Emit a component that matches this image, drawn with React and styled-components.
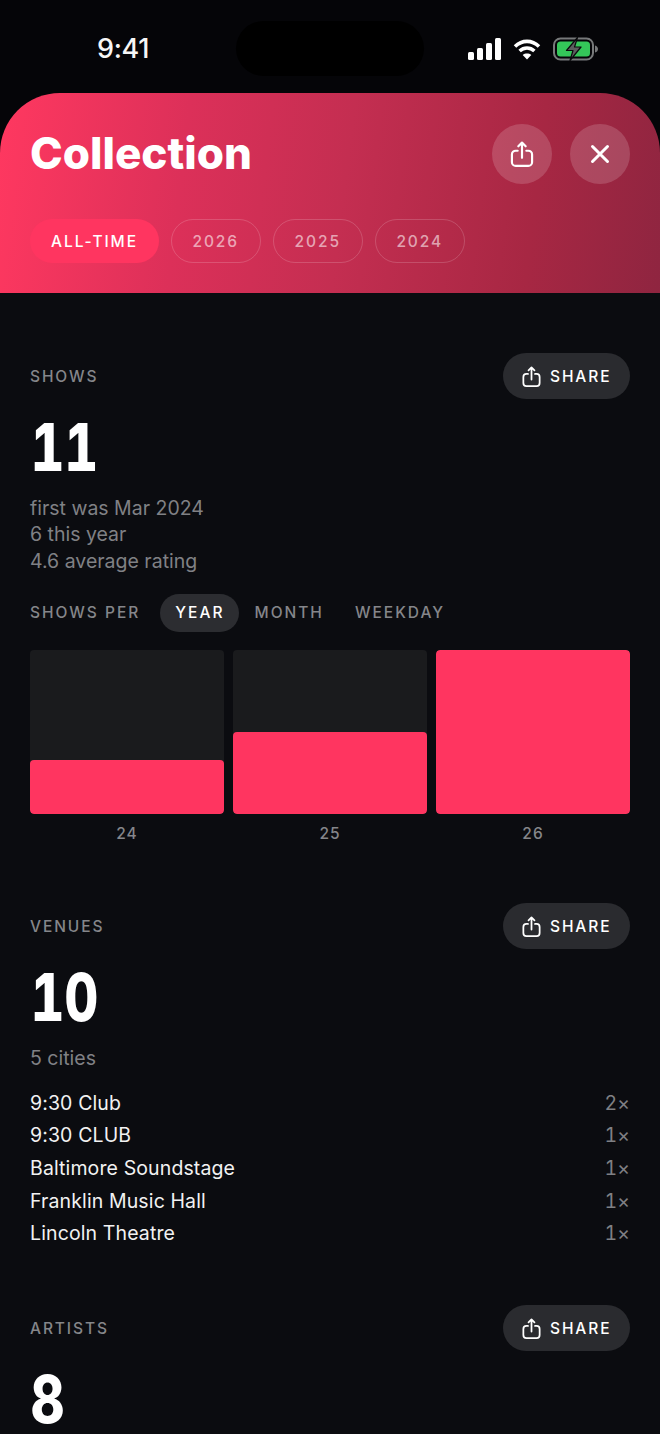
import React from "react";
import styled, { createGlobalStyle } from "styled-components";

const Global = createGlobalStyle`
  html, body { margin: 0; padding: 0; background: #0b0c10; }
  body { font-family: Inter, "Noto Sans", sans-serif; -webkit-font-smoothing: antialiased; }
  * { box-sizing: border-box; }
`;

const Page = styled.div`
  width: 660px; height: 1434px; overflow: hidden; background: #0b0c10; color: #fff;
`;
const StatusBar = styled.div`
  height: 93px; background: #050508; display: flex; align-items: flex-start; padding: 21px 61px 0 97px;
`;
const Time = styled.div`
  font-size: 27px; font-weight: 500; line-height: 55px; width: 139px; letter-spacing: -0.3px; color: #f6f6f6;
`;
const Island = styled.div`
  width: 188px; height: 55px; border-radius: 28px; background: #000;
`;
const StatusIcons = styled.div`
  margin-left: 44px; height: 55px; display: flex; align-items: center; gap: 12px;
`;
const SheetBack = styled.div`background: #050508;`;
const Header = styled.header`
  height: 200px; border-radius: 60px 60px 0 0; padding: 30px 30px 0;
  background: linear-gradient(97deg, #ff3860 0%, #dc3059 28%, #c42e51 52%, #a72743 80%, #8f2540 100%);
`;
const TitleRow = styled.div`
  display: flex; align-items: center; justify-content: space-between; height: 60px;
`;
const Title = styled.h1`
  margin: 0; font-size: 44px; font-weight: 800; letter-spacing: 0; line-height: 60px;
`;
const HeaderButtons = styled.div`display: flex; gap: 18px; margin-top: 2px;`;
const RoundButton = styled.button`
  width: 60px; height: 60px; border-radius: 50%; border: 0; padding: 0; color: #fff;
  background: rgba(255,255,255,.16); display: flex; align-items: center; justify-content: center;
`;
const Pills = styled.div`display: flex; gap: 11.5px; margin-top: 36px;`;
const Pill = styled.div`
  height: 44px; width: ${p => p.$w}px; border-radius: 22px; display: flex; align-items: center; justify-content: center;
  font-size: 15.5px; font-weight: 500; letter-spacing: 1.9px;
  ${p => p.$active
    ? `background: #ff3560; color: #fff;`
    : `border: 1.5px solid rgba(255,255,255,.17); color: rgba(255,255,255,.58);`}
`;
const Main = styled.main`padding: 60px 30px 0; display: flex; flex-direction: column;`;
const Section = styled.section`margin-bottom: ${p => p.$mb}px;`;
const SectionHead = styled.div`display: flex; align-items: center; justify-content: space-between; height: 46px;`;
const Label = styled.div`
  font-size: 15.5px; font-weight: 500; letter-spacing: 1.9px; color: #85868a;
`;
const ShareBtn = styled.button`
  width: 127px; height: 46px; border-radius: 23px; border: 0; background: #2a2b2f; color: #fff;
  display: flex; align-items: center; justify-content: flex-start; gap: 8px; padding: 0 0 0 18px;
  font: 500 15.5px Inter, sans-serif; letter-spacing: 1.9px;
`;
const BigNumber = styled.div`
  font-family: Inter, sans-serif; font-weight: 800; font-variant-numeric: tabular-nums;
  font-size: 66px; line-height: 60px; height: 60px; margin-top: 18px; padding-left: 1px;
  transform: scaleX(.79); transform-origin: left center;
`;
const SubLines = styled.div`margin-top: ${p => p.$mt}px; font-size: 19.5px; line-height: 26.4px; color: #808185;`;
const TabRow = styled.div`display: flex; align-items: center; height: 38px; margin-top: 20px;`;
const TabLabel = styled.span`
  font-size: 15.5px; font-weight: 500; letter-spacing: 2px; color: #85868a; margin-right: 20px; padding-bottom: 1px;
`;
const Tab = styled.span`
  height: 38px; border-radius: 19px; display: flex; align-items: center; padding-bottom: 1px;
  font-size: 15.5px; font-weight: 500; letter-spacing: 2px;
  ${p => p.$active
    ? `background: #2c2d31; color: #fff; padding-left: 15px; padding-right: 15px; margin-right: -1px;`
    : `color: #85868a; padding-left: 16px; padding-right: 15px;`}
`;
const Chart = styled.div`display: grid; grid-template-columns: repeat(3, 194px); gap: 9px; margin-top: 18px;`;
const Track = styled.div`
  height: 164px; background: #1a1b1d; border-radius: 4px; display: flex; align-items: flex-end; overflow: hidden;
`;
const Fill = styled.div`width: 100%; background: #ff3560; border-radius: 4px;`;
const BarLabel = styled.div`
  text-align: center; font-size: 15.5px; font-weight: 500; letter-spacing: 1px; color: #85868a; line-height: 40px; height: 38px;
`;
const Rows = styled.div`margin-top: 15px; display: flex; flex-direction: column;`;
const Row = styled.div`
  display: flex; justify-content: space-between; height: 32.7px; line-height: 32.7px; font-size: 19.5px; color: #f2f2f2;
  letter-spacing: 0.12px;
`;
const Count = styled.span`color: #7f8084; font-variant-numeric: tabular-nums;`;

const ShareIcon = ({ s = 24, w = 2 }) => (
  <svg width={s} height={s} viewBox="0 0 24 24" fill="none" stroke="currentColor" strokeWidth={w} strokeLinecap="round" strokeLinejoin="round">
    <path d="M12 15.5V1.5M8.6 4.9L12 1.5l3.4 3.4" />
    <path d="M8 9H6.200a3.500 3.500 0 0 0-3.500 3.500v7a3.500 3.500 0 0 0 3.500 3.500h11.600a3.500 3.500 0 0 0 3.500-3.500v-7A3.500 3.500 0 0 0 17.800 9H16" />
  </svg>
);
const CloseIcon = () => (
  <svg width="22" height="22" viewBox="0 0 22 22" fill="none" stroke="currentColor" strokeWidth="3" strokeLinecap="round">
    <path d="M3.500 3.500l15 15M18.500 3.500l-15 15" />
  </svg>
);
const Signal = () => (
  <svg width="33" height="22" viewBox="0 0 33 22" fill="#fff">
    <rect x="0" y="14" width="6" height="8" rx="1.5" /><rect x="9" y="10" width="6" height="12" rx="1.5" />
    <rect x="18" y="5" width="6" height="17" rx="1.5" /><rect x="27" y="0" width="6" height="22" rx="1.5" />
  </svg>
);
const Wifi = () => (
  <svg width="28" height="22" viewBox="0 0 28 22" fill="none" stroke="#fff" strokeWidth="3.6">
    <path d="M2 8.500C9 1.700 19 1.700 26 8.500" />
    <path d="M6.600 13C11 9 17 9 21.400 13" />
    <path d="M14 21.500l-4.300-4.600c2.500-1.900 6.100-1.900 8.600 0z" fill="#fff" stroke="none" />
  </svg>
);
const Battery = () => (
  <svg width="46" height="24" viewBox="0 0 46 24">
    <rect x="1" y="1.500" width="39" height="21" rx="6.500" fill="none" stroke="#77797a" strokeWidth="2" />
    <rect x="4" y="4.500" width="33" height="15" rx="3.500" fill="#34c759" />
    <path d="M42 8.500c2 .5 3 2 3 3.500s-1 3-3 3.500z" fill="#77797a" />
    <path d="M24.500 0.500L13.500 13.500h6.500L17 23.500l11-13.500h-6.500z" fill="#5c5e5f" stroke="#0a0b0d" strokeWidth="1.2" strokeLinejoin="round" />
  </svg>
);

const venues = [["9:30 Club","2×"],["9:30 CLUB","1×"],["Baltimore Soundstage","1×"],["Franklin Music Hall","1×"],["Lincoln Theatre","1×"]];
const bars = [["24",54],["25",82],["26",164]];

const Head = ({ children }) => (
  <SectionHead>
    <Label>{children}</Label>
    <ShareBtn><ShareIcon s={21} w={2} />SHARE</ShareBtn>
  </SectionHead>
);

export default function App() {
  return (
    <Page>
      <Global />
      <StatusBar>
        <Time>9:41</Time>
        <Island />
        <StatusIcons><Signal /><Wifi /><Battery /></StatusIcons>
      </StatusBar>
      <SheetBack>
        <Header>
          <TitleRow>
            <Title>Collection</Title>
            <HeaderButtons>
              <RoundButton><ShareIcon s={26} w={2} /></RoundButton>
              <RoundButton><CloseIcon /></RoundButton>
            </HeaderButtons>
          </TitleRow>
          <Pills>
            <Pill $active $w={129}>ALL-TIME</Pill>
            <Pill $w={90.5}>2026</Pill>
            <Pill $w={90.5}>2025</Pill>
            <Pill $w={90.5}>2024</Pill>
          </Pills>
        </Header>
      </SheetBack>
      <Main>
        <Section $mb={51}>
          <Head>SHOWS</Head>
          <BigNumber>11</BigNumber>
          <SubLines $mt={18}>
            <div>first was Mar 2024</div>
            <div>6 this year</div>
            <div>4.6 average rating</div>
          </SubLines>
          <TabRow>
            <TabLabel>SHOWS PER</TabLabel>
            <Tab $active>YEAR</Tab>
            <Tab>MONTH</Tab>
            <Tab>WEEKDAY</Tab>
          </TabRow>
          <Chart>
            {bars.map(([l, h]) => (
              <div key={l}>
                <Track><Fill style={{ height: h }} /></Track>
                <BarLabel>{l}</BarLabel>
              </div>
            ))}
          </Chart>
        </Section>
        <Section $mb={55}>
          <Head>VENUES</Head>
          <BigNumber>10</BigNumber>
          <SubLines $mt={18}><div>5 cities</div></SubLines>
          <Rows>
            {venues.map(([n, c]) => <Row key={n}><span>{n}</span><Count>{c}</Count></Row>)}
          </Rows>
        </Section>
        <Section $mb={0}>
          <Head>ARTISTS</Head>
          <BigNumber>8</BigNumber>
        </Section>
      </Main>
    </Page>
  );
}
